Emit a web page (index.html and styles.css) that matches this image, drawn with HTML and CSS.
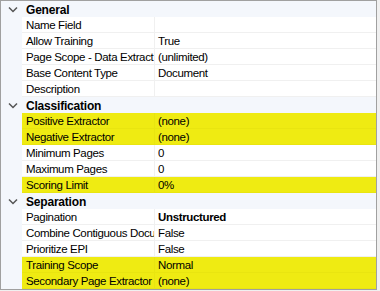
FILE: index.html
```html
<!DOCTYPE html>
<html lang="en">
<head>
    <meta charset="UTF-8">
    <title>Properties</title>
    <link rel="stylesheet" href="styles.css">
</head>
<body>
    <div class="grid">
        <div class="category">
            <span class="toggle"><svg width="10" height="7" viewBox="0 0 10 7"><path d="M1 1.5 L5 5.5 L9 1.5" fill="none" stroke="#555" stroke-width="1.5"/></svg></span>
            <span class="cat-name">General</span>
        </div>
        <div class="row"><span class="name">Name Field</span><span class="value"></span></div>
        <div class="row"><span class="name">Allow Training</span><span class="value">True</span></div>
        <div class="row"><span class="name">Page Scope - Data Extract</span><span class="value">(unlimited)</span></div>
        <div class="row"><span class="name">Base Content Type</span><span class="value">Document</span></div>
        <div class="row"><span class="name">Description</span><span class="value"></span></div>

        <div class="category">
            <span class="toggle"><svg width="10" height="7" viewBox="0 0 10 7"><path d="M1 1.5 L5 5.5 L9 1.5" fill="none" stroke="#555" stroke-width="1.5"/></svg></span>
            <span class="cat-name">Classification</span>
        </div>
        <div class="row marked"><span class="name">Positive Extractor</span><span class="value">(none)</span></div>
        <div class="row marked"><span class="name">Negative Extractor</span><span class="value">(none)</span></div>
        <div class="row"><span class="name">Minimum Pages</span><span class="value">0</span></div>
        <div class="row"><span class="name">Maximum Pages</span><span class="value">0</span></div>
        <div class="row marked"><span class="name">Scoring Limit</span><span class="value">0%</span></div>

        <div class="category">
            <span class="toggle"><svg width="10" height="7" viewBox="0 0 10 7"><path d="M1 1.5 L5 5.5 L9 1.5" fill="none" stroke="#555" stroke-width="1.5"/></svg></span>
            <span class="cat-name">Separation</span>
        </div>
        <div class="row"><span class="name">Pagination</span><span class="value bold">Unstructured</span></div>
        <div class="row"><span class="name">Combine Contiguous Docu</span><span class="value">False</span></div>
        <div class="row"><span class="name">Prioritize EPI</span><span class="value">False</span></div>
        <div class="row marked"><span class="name">Training Scope</span><span class="value">Normal</span></div>
        <div class="row marked"><span class="name">Secondary Page Extractor</span><span class="value">(none)</span></div>
    </div>
</body>
</html>
```

FILE: styles.css
```css
* {
    margin: 0;
    padding: 0;
    box-sizing: border-box;
}

body {
    font-family: 'Liberation Sans', Arial, sans-serif;
    font-size: 11.5px;
    letter-spacing: -0.35px;
    color: #000;
    background-color: #f0f0f0;
}

.grid {
    width: 377px;
    height: 290px;
    border: 1px solid #a0a0a0;
    background-color: #f4f7fc;
    display: flex;
    flex-direction: column;
}

.category {
    height: 16px;
    display: flex;
    align-items: center;
    background-color: #f4f7fc;
}

.toggle {
    width: 22px;
    display: flex;
    justify-content: center;
    padding-left: 1px;
}

.toggle svg {
    display: block;
}

.cat-name {
    font-weight: bold;
    font-size: 12px;
    letter-spacing: -0.2px;
    padding-left: 3px;
    padding-top: 1px;
}

.row {
    height: 16px;
    display: flex;
    margin-left: 21px;
    background-color: #fff;
}

.row .name,
.row .value {
    line-height: 15px;
    padding-top: 1px;
    border-bottom: 1px solid #f0f0f0;
    white-space: nowrap;
    overflow: hidden;
}

.name {
    width: 133px;
    padding-left: 4px;
    border-right: 1px solid #f0f0f0;
}

.value {
    flex: 1;
    padding-left: 3px;
}

.bold {
    font-weight: bold;
}

.row.marked {
    background-color: #efeb12;
}

.row.marked .name,
.row.marked .value {
    border-color: #e9e510;
}
```
